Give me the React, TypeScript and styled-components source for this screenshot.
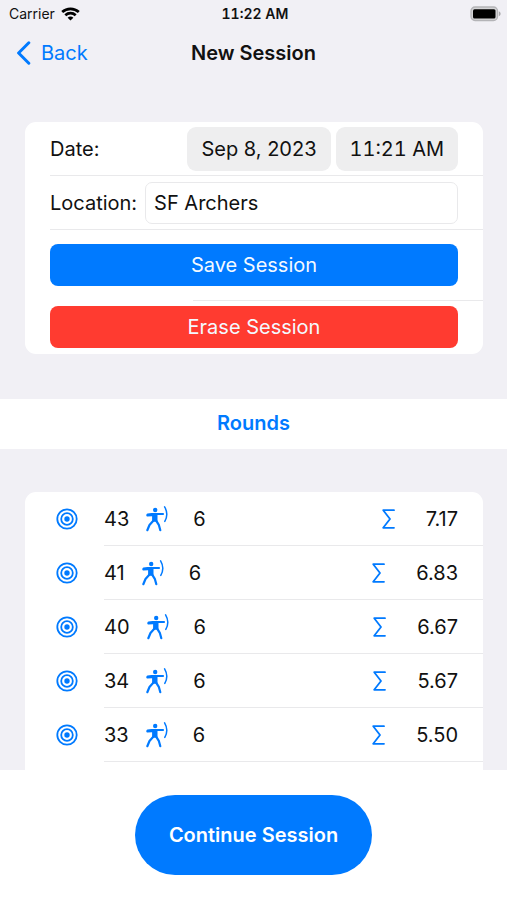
import React from "react";
import styled, { createGlobalStyle } from "styled-components";

const BLUE = "#007aff";
const RED = "#ff3b30";
const GROUPED = "#f1f0f5";
const LINE = "#e9e9eb";

const GlobalStyle = createGlobalStyle`
  *, *::before, *::after { box-sizing: border-box; }
  body {
    margin: 0;
    background: #fff;
    color: #111;
    font-family: Inter, Roboto, sans-serif;
    font-size: 20px;
    line-height: 24px;
  }
  button, input { font: inherit; color: inherit; }
  button { border: 0; padding: 0; cursor: pointer; }
  h1, h2, ul { margin: 0; padding: 0; }
`;

const Screen = styled.div`
  display: flex;
  flex-direction: column;
  height: 100vh;
  background: ${GROUPED};
`;

const StatusBar = styled.div`
  display: grid;
  grid-template-columns: 1fr auto 1fr;
  align-items: center;
  flex: none;
  height: 27px;
  padding: 0 6px 0 9px;
  font-size: 14px;
  line-height: 16px;
`;

const Carrier = styled.span`
  display: flex;
  align-items: center;
  gap: 6px;
`;

const Clock = styled.time`
  font-weight: 600;
  font-variant-numeric: tabular-nums;
`;

const BatteryIcon = styled.svg`
  justify-self: end;
`;

const NavBar = styled.header`
  display: grid;
  grid-template-columns: 1fr auto 1fr;
  align-items: center;
  flex: none;
  height: 51px;
  padding: 0 16px;
`;

const BackButton = styled.button`
  display: flex;
  align-items: center;
  justify-self: start;
  gap: 10px;
  background: none;
  color: ${BLUE};
`;

const Title = styled.h1`
  font-size: 20px;
  font-weight: 600;
`;

const FormCard = styled.form`
  flex: none;
  margin: 44px 24px 45px 25px;
  border-radius: 11px;
  background: #fff;
  overflow: hidden;
`;

const Field = styled.div`
  display: flex;
  align-items: center;
  height: 54px;
  margin-left: 25px;
  padding-right: 25px;
  gap: 5px;
  border-bottom: 1px solid ${LINE};
`;

const FieldLabel = styled.label`
  flex: none;
`;

const FieldName = styled.span`
  flex: 1;
`;

const PickerButton = styled.button<{ $tabular?: boolean }>`
  height: 44px;
  padding: 0 14px;
  border-radius: 9px;
  background: #eeeeef;
  font-variant-numeric: ${(p) => (p.$tabular ? "tabular-nums" : "normal")};
`;

const TextInput = styled.input`
  flex: 1;
  min-width: 0;
  height: 42px;
  margin-left: 3px;
  padding: 0 8px;
  border: 1px solid ${LINE};
  border-radius: 7px;
  background: #fff;
`;

const Actions = styled.div`
  display: flex;
  flex-direction: column;
  padding: 14px 0 6px 25px;
`;

const ActionDivider = styled.hr`
  width: 67%;
  height: 1px;
  margin: 14px 0 5px auto;
  border: 0;
  background: ${LINE};
`;

const ActionButton = styled.button<{ $tone: string }>`
  height: 42px;
  margin-right: 25px;
  border-radius: 8px;
  background: ${(p) => p.$tone};
  color: #f4f9ff;
`;

const SectionTitle = styled.h2`
  flex: none;
  height: 50px;
  background: #fff;
  color: ${BLUE};
  font-size: 20px;
  font-weight: 600;
  line-height: 48px;
  text-align: center;
`;

const RoundsScroller = styled.main`
  display: flex;
  flex-direction: column;
  flex: 1;
  min-height: 0;
  padding: 43px 24px 0 25px;
  overflow-y: auto;
  scrollbar-width: none;
`;

const RoundsCard = styled.ul`
  flex: 1 0 auto;
  border-radius: 11px 11px 0 0;
  background: #fff;
  list-style: none;
`;

const RoundRow = styled.li`
  display: flex;
  align-items: center;
  height: 54px;
  padding-left: 31px;
  color: ${BLUE};
`;

const RoundDetail = styled.div`
  display: flex;
  align-items: center;
  flex: 1;
  height: 54px;
  margin-left: 26px;
  padding-right: 25px;
  border-bottom: 1px solid ${LINE};
`;

const Value = styled.span`
  color: #111;
`;

const ArcherIcon = styled.svg`
  margin: 0 25px 0 16px;
`;

const SigmaIcon = styled.svg`
  margin: 0 31px 0 auto;
`;

const Footer = styled.footer`
  display: flex;
  justify-content: center;
  flex: none;
  padding: 25px 0;
  background: #fff;
`;

const ContinueButton = styled.button`
  height: 80px;
  padding: 0 34px;
  border-radius: 40px;
  background: ${BLUE};
  color: #fff;
  font-weight: 600;
`;

const rounds = [
  { total: 43, arrows: 6, average: "7.17" },
  { total: 41, arrows: 6, average: "6.83" },
  { total: 40, arrows: 6, average: "6.67" },
  { total: 34, arrows: 6, average: "5.67" },
  { total: 33, arrows: 6, average: "5.50" },
];

const Wifi = () => (
  <svg width="19" height="14" viewBox="0 0 19 14" fill="none" stroke="#000" strokeWidth="2.7" aria-hidden="true">
    <path d="M1.2 5.1C5.8.7 13.2.7 17.8 5.1" />
    <path d="M4.3 8.3c3-2.8 7.4-2.8 10.4 0" />
    <path d="M9.5 13.6 6.6 10.7c1.6-1.5 4.2-1.5 5.8 0Z" fill="#000" stroke="none" />
  </svg>
);

const Battery = () => (
  <BatteryIcon width="31" height="16" viewBox="0 0 31 16" aria-hidden="true">
    <rect x="1" y="1" width="26.5" height="13.5" rx="4" fill="#d4d4d6" stroke="#b4b4b7" strokeWidth="1.3" />
    <rect x="3" y="3.2" width="22.5" height="9.3" rx="1.5" fill="#000" />
    <path d="M28.8 5.3c2.4.8 2.4 4.2 0 5Z" fill="#a9a9ac" />
  </BatteryIcon>
);

const Chevron = () => (
  <svg width="15" height="24" viewBox="0 0 15 24" fill="none" stroke={BLUE} strokeWidth="3" strokeLinecap="round" strokeLinejoin="round" aria-hidden="true">
    <path d="M12.8 1.8 2.6 12l10.2 10.2" />
  </svg>
);

const Target = () => (
  <svg width="22" height="22" viewBox="0 0 22 22" fill="none" stroke="currentColor" strokeWidth="1.8" aria-hidden="true">
    <circle cx="11" cy="11" r="9.7" />
    <circle cx="11" cy="11" r="5.8" />
    <circle cx="11" cy="11" r="2.7" fill="currentColor" stroke="none" />
  </svg>
);

const Archer = () => (
  <ArcherIcon width="23" height="26" viewBox="0 0 23 26" fill="none" stroke="currentColor" strokeLinecap="round" strokeLinejoin="round" aria-hidden="true">
    <circle cx="10.2" cy="4" r="2.2" fill="currentColor" stroke="none" />
    <path d="M6.5 7h12.3v2.1h-6.3v6.6H7.1v-5.4l-4.6.3C.9 10.6.9 8 2.5 7.6Z" fill="currentColor" stroke="none" />
    <path d="M8.3 14.8 4.5 19l-2.2 5.2M11.3 14.8l2.5 4 1.5 5.4" strokeWidth="2.2" />
    <path d="M19.6.9c2.9 4.9 2.9 9.8.2 14.5" strokeWidth="1.5" />
  </ArcherIcon>
);

const Sigma = () => (
  <SigmaIcon width="13" height="20" viewBox="0 0 13 20" fill="none" stroke="currentColor" strokeWidth="1.8" strokeLinecap="round" strokeLinejoin="round" aria-hidden="true">
    <path d="M12 1.2H1.2L8 10l-6.8 8.8H12" />
  </SigmaIcon>
);

export default function App() {
  return (
    <>
      <GlobalStyle />
      <Screen>
        <StatusBar>
          <Carrier>
            Carrier
            <Wifi />
          </Carrier>
          <Clock>11:22 AM</Clock>
          <Battery />
        </StatusBar>
        <NavBar>
          <BackButton type="button">
            <Chevron />
            Back
          </BackButton>
          <Title>New Session</Title>
        </NavBar>
        <FormCard onSubmit={(e: React.FormEvent) => e.preventDefault()}>
          <Field role="group" aria-labelledby="date-name">
            <FieldName id="date-name">Date:</FieldName>
            <PickerButton type="button">Sep 8, 2023</PickerButton>
            <PickerButton type="button" $tabular>11:21 AM</PickerButton>
          </Field>
          <Field>
            <FieldLabel htmlFor="location">Location:</FieldLabel>
            <TextInput id="location" type="text" defaultValue="SF Archers" />
          </Field>
          <Actions>
            <ActionButton type="submit" $tone={BLUE}>Save Session</ActionButton>
            <ActionDivider />
            <ActionButton type="button" $tone={RED}>Erase Session</ActionButton>
          </Actions>
        </FormCard>
        <SectionTitle>Rounds</SectionTitle>
        <RoundsScroller>
          <RoundsCard>
            {rounds.map((round) => (
              <RoundRow key={round.total}>
                <Target />
                <RoundDetail>
                  <Value>{round.total}</Value>
                  <Archer />
                  <Value>{round.arrows}</Value>
                  <Sigma />
                  <Value>{round.average}</Value>
                </RoundDetail>
              </RoundRow>
            ))}
          </RoundsCard>
        </RoundsScroller>
        <Footer>
          <ContinueButton type="button">Continue Session</ContinueButton>
        </Footer>
      </Screen>
    </>
  );
}
